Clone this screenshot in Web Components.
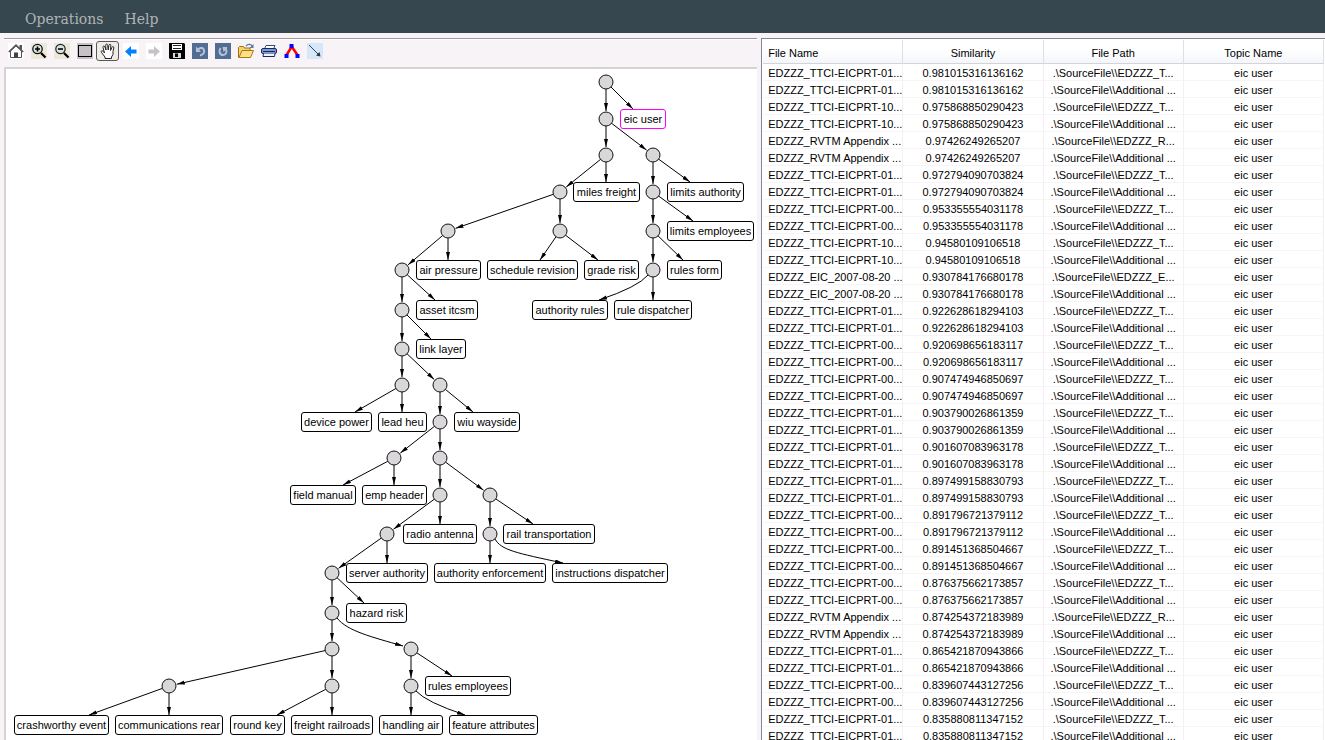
<!DOCTYPE html>
<html lang="en">
<head>
<meta charset="utf-8">
<title>Topic Browser</title>
<style>
  html, body { margin: 0; height: 100%; }
  body { background: #f7f3f7; overflow: hidden; font-family: "Liberation Sans", Arial, sans-serif; font-size: 11px; color: #000; }
</style>
</head>
<body>
<topic-app></topic-app>

<script>
const define = (name, html, setup) => {
  const template = document.createElement('template');
  template.innerHTML = html;
  customElements.define(name, class extends HTMLElement {
    connectedCallback() {
      if (this.shadowRoot) return;
      this.attachShadow({ mode: 'open' }).append(template.content.cloneNode(true));
      if (setup) setup(this, this.shadowRoot);
    }
  });
};

/* ---------- Menu ---------- */
define('menu-item', `
<style>
  :host { display: block; }
  button { border: 0; padding: 0; background: none; color: #b0b4b6; font: 14px/20px "DejaVu Serif", serif; }
</style>
<button type="button"><slot></slot></button>`);

define('menu-bar', `
<style>
  :host { display: block; background: #37474f; }
  nav { display: flex; align-items: center; gap: 21px; height: 33px; padding: 4px 25px 0; box-sizing: border-box; }
</style>
<nav><slot></slot></nav>`);

/* ---------- Toolbar ---------- */
const ICONS = {
  home: `<rect width="16" height="16" fill="#fff"/><path d="M11.500 2H14v5l-2.500-2z" fill="#555"/><path d="M2.500 8v6.500h11V8L8 3z" fill="#fdfdfd" stroke="#555"/><path d="M.8 9 8 2l7.200 7" fill="none" stroke="#555" stroke-width="1.600"/><path d="M6 9.500h4V15H6z" fill="#444"/>`,
  zoomin: `<rect width="16" height="16" fill="#ece9d8"/><circle cx="6.500" cy="6" r="4.700" fill="#d8e4e0" stroke="#111" stroke-width="1.300"/><path d="M4 6h5M6.500 3.500v5" stroke="#000" stroke-width="1.600"/><path d="M10 10l4.500 4.500" stroke="#000" stroke-width="2.300"/>`,
  zoomout: `<rect width="16" height="16" fill="#ece9d8"/><circle cx="6.500" cy="6" r="4.700" fill="#d8e4e0" stroke="#222" stroke-width="1.200"/><path d="M4 6h5" stroke="#000" stroke-width="1.600"/><path d="M10 10l4.500 4.500" stroke="#000" stroke-width="2.300"/>`,
  select: `<rect width="16" height="16" fill="#c6c3c6"/><rect x="1.500" y="2.500" width="13" height="11" fill="#c6c3c6" stroke="#000"/>`,
  pan: `<path d="M5 15.500V14L1.500 9.500c-1-1.500.5-2.300 1.500-1.300L4.500 10 3 4.500c-.4-1.600 1.400-2 1.900-.5L6 7 5.700 2.300c0-1.600 1.800-1.600 2 0L8.200 7l.7-4.700c.3-1.500 2-1.300 1.900.2L10.500 7.500l1.500-3.200c.6-1.400 2.200-.8 1.800.6L13 8.500v3L11.500 14v1.500z" fill="#fff" stroke="#222" stroke-width="1"/>`,
  back: `<rect width="16" height="16" fill="#fff"/><path d="M2 8.500 8 3v3.500h5.500v4H8V14z" fill="#0082ff"/>`,
  forward: `<rect width="16" height="16" fill="#fff"/><path d="M14 8.500 8 3v3.500H2.500v4H8V14z" fill="#c6c3c6"/>`,
  save: `<path d="M0 0h15l1 1v15H1l-1-1z" fill="#000"/><path d="M3 1h10v6H3z" fill="#fff"/><path d="M4 2.500h8M4 5.500h8" stroke="#222"/><path d="M4 10h8v5H4z" fill="#d8d8d8"/><path d="M6 10.500h3v3.500H6z" fill="#000"/>`,
  undo: `<rect width="16" height="16" fill="#526d94"/><path d="M8 12.500c4-1 5-4 3.500-6.500C10 4 7 5 5.500 7.500" fill="none" stroke="#b5c3d6" stroke-width="2"/><path d="M4 3.500v5.500h5z" fill="#b5c3d6"/>`,
  redo: `<rect width="16" height="16" fill="#526d94"/><path d="M5.500 5C3.500 8 4.500 12 8 12c3 0 4.500-3 2.800-6" fill="none" stroke="#b5c3d6" stroke-width="2"/><path d="M7.500 4H12v1.500L8.500 9z" fill="#b5c3d6"/>`,
  open: `<path d="M.5 14.500v-10l1-1h4l1 1.500H12V8" fill="#f7d36b" stroke="#9c7110"/><path d="M1 14.500 4 7.500h11.500l-3 7z" fill="#ffe08a" stroke="#a8780f"/><path d="M8 3c2-2.500 5-2 6 0" fill="none" stroke="#5579a8" stroke-width="1.300"/><path d="M15.500 1v4h-4z" fill="#5579a8"/>`,
  print: `<path d="M3.500 6 5 2.500h9L12.500 6z" fill="#fff" stroke="#334a86"/><rect x=".5" y="5.500" width="15" height="5" rx="1.500" fill="#7b9bd6" stroke="#17275f"/><path d="M2 8.500h12" stroke="#17275f"/><path d="M2.500 10.500 2 13.500h11.500l.5-3" fill="#eef3ff" stroke="#17275f"/>`,
  layout: `<path d="M7.500 4 2.500 12M8 4l5.500 8" stroke="#f00" stroke-width="2.500"/><path d="M5.500 1h4v4h-4zM.5 11h4v4h-4zM11.500 11h4v4h-4z" fill="#0008f7"/>`,
  edge: `<rect width="16" height="16" fill="#d6e7f7"/><path d="M2 2l10 10" stroke="#33475c" stroke-width="1"/><path d="M13.500 13.500 12.500 9 9 12.500z" fill="#26384c"/>`
};

define('tool-button', `
<style>
  :host { display: block; width: 23px; }
  button { display: flex; align-items: center; justify-content: center; width: 23px; height: 20px; box-sizing: border-box; padding: 0; border: 1px solid transparent; border-radius: 3px; background: none; }
  :host([pressed]) button { border-color: #5a595a; background: #efebe7; }
  svg { display: block; width: 16px; height: 16px; flex: none; }
</style>
<button type="button"><svg viewBox="0 0 16 16" aria-hidden="true"></svg></button>`, (host, root) => {
  root.querySelector('svg').innerHTML = ICONS[host.getAttribute('icon')];
  const button = root.querySelector('button');
  button.setAttribute('aria-label', host.getAttribute('label'));
  if (host.hasAttribute('pressed')) button.setAttribute('aria-pressed', 'true');
});

define('tool-bar', `
<style>
  :host { display: flex; align-items: center; height: 29px; box-sizing: border-box; border-top: 1px solid #9c9a9c; box-shadow: inset 0 1px #fff; padding-bottom: 4px; }
</style>
<slot></slot>`);

/* ---------- Topic tree ---------- */
const NODES = {
  a: [600, 13], b: [600, 50], c: [600, 86], d: [554, 123], e: [647, 86], f: [647, 123], g: [647, 162], h: [647, 201],
  i: [554, 162], j: [442, 162], k: [396, 201], l: [396, 241], m: [396, 280], n: [396, 316], o: [434, 316], p: [434, 353],
  q: [388, 389], r: [434, 389], s: [434, 426], t: [484, 426], u: [484, 465], v: [381, 465], w: [326, 504], x: [326, 544],
  y: [326, 580], z: [405, 580], aa: [405, 617], ab: [326, 617], ac: [163, 617]
};
const LINKS = ['ab', 'bc', 'be', 'cd', 'ef', 'fg', 'gh', 'di', 'dj', 'jk', 'kl', 'lm', 'mn', 'mo', 'op', 'pq', 'pr', 'rs', 'rt', 'tu', 'sv', 'vw', 'wx', 'xy']
  .map(pair => [...pair]).concat([['y', 'ab'], ['y', 'ac'], ['z', 'aa']]);
/* parent, text, left, middle, width, x of the arrow tip, optional curve */
const TOPICS = [
  ['a', 'eic user', 614, 50, 46, 627],
  ['c', 'miles freight', 567, 123, 67, 600],
  ['e', 'limits authority', 661, 123, 77, 684],
  ['f', 'limits employees', 661, 162, 87, 687],
  ['j', 'air pressure', 410, 201, 65, 442],
  ['i', 'schedule revision', 481, 201, 91, 534],
  ['i', 'grade risk', 578, 201, 55, 592],
  ['g', 'rules form', 661, 201, 55, 677],
  ['h', 'authority rules', 526, 241, 76, 593, 'Q632 218 593 231'],
  ['h', 'rule dispatcher', 608, 241, 78, 647],
  ['k', 'asset itcsm', 410, 241, 62, 429],
  ['l', 'link layer', 410, 280, 50, 425],
  ['n', 'device power', 295, 353, 71, 349],
  ['n', 'lead heu', 372, 353, 49, 396],
  ['o', 'wiu wayside', 448, 353, 66, 467],
  ['q', 'field manual', 284, 426, 66, 337],
  ['q', 'emp header', 356, 426, 65, 388],
  ['s', 'radio antenna', 397, 465, 74, 434],
  ['t', 'rail transportation', 497, 465, 92, 527],
  ['v', 'server authority', 340, 504, 82, 381],
  ['u', 'authority enforcement', 428, 504, 112, 484],
  ['u', 'instructions dispatcher', 546, 504, 116, 557, 'C495 481 510 484 557 494'],
  ['w', 'hazard risk', 340, 544, 61, 358],
  ['z', 'rules employees', 419, 617, 86, 446],
  ['ac', 'crashworthy event', 8, 656, 95, 83],
  ['ac', 'communications rear', 109, 656, 108, 163],
  ['ab', 'round key', 224, 656, 55, 271],
  ['ab', 'freight railroads', 285, 656, 82, 326],
  ['aa', 'handling air', 373, 656, 64, 405],
  ['aa', 'feature attributes', 443, 656, 89, 459, 'Q420 633 459 646']
];

define('topic-label', `
<style>
  :host { position: absolute; box-sizing: border-box; height: 20px; border: 1px solid #000; border-radius: 3px; background: #fff; font-size: 11px; line-height: 18px; text-align: center; white-space: nowrap; }
  :host([selected]) { border-color: #f0f; }
</style>
<slot></slot>`);

define('topic-tree', `
<style>
  :host { display: block; position: relative; overflow: hidden; background: #fff; border: solid #d6d3d6; border-width: 2px 0 0 2px; }
  svg { position: absolute; inset: 0; width: 100%; height: 100%; }
  .edge { fill: none; stroke: #000; marker-end: url(#tip); }
  circle { fill: #d9d7d9; stroke: #111; }
</style>
<svg aria-hidden="true">
  <defs><marker id="tip" markerWidth="9" markerHeight="5" refX="8" refY="2" orient="auto" markerUnits="userSpaceOnUse"><path d="M0 0 8 2 0 4z"/></marker></defs>
</svg>`, (host, root) => {
  const RADIUS = 7;
  const rim = ([x, y], [tx, ty], gap) => {
    const d = Math.hypot(tx - x, ty - y);
    return [x + (tx - x) * gap / d, y + (ty - y) * gap / d];
  };
  let art = '';
  for (const [from, to] of LINKS) {
    const a = NODES[from], b = NODES[to];
    art += `<path class="edge" d="M${rim(a, b, RADIUS)}L${rim(b, a, RADIUS + 1)}"/>`;
  }
  art += '<path class="edge" d="M331 549C341 562 366 568 397 577"/>';
  for (const [parent, , , middle, , tip, curve] of TOPICS) {
    const a = NODES[parent], end = [tip, middle - 10];
    const start = curve ? [a[0] + (tip < a[0] ? -5 : 5), a[1] + 5] : rim(a, end, RADIUS);
    art += `<path class="edge" d="M${start}${curve || 'L' + end}"/>`;
  }
  for (const [x, y] of Object.values(NODES)) art += `<circle cx="${x}" cy="${y}" r="${RADIUS}"/>`;
  root.querySelector('svg').insertAdjacentHTML('beforeend', art);
  for (const [, text, left, middle, width] of TOPICS) {
    const label = document.createElement('topic-label');
    label.textContent = text;
    label.style.cssText = `left:${left}px;top:${middle - 10}px;width:${width}px`;
    if (text === 'eic user') label.setAttribute('selected', '');
    root.append(label);
  }
});

/* ---------- Result table ---------- */
const RESULTS = [
  ['TTCI-EICPRT-01', '0.981015316136162'], ['TTCI-EICPRT-10', '0.975868850290423'], ['RVTM Appendix ', '0.97426249265207'],
  ['TTCI-EICPRT-01', '0.972794090703824'], ['TTCI-EICPRT-00', '0.953355554031178'], ['TTCI-EICPRT-10', '0.94580109106518'],
  ['EIC_2007-08-20 ', '0.930784176680178'], ['TTCI-EICPRT-01', '0.922628618294103'], ['TTCI-EICPRT-00', '0.920698656183117'],
  ['TTCI-EICPRT-00', '0.907474946850697'], ['TTCI-EICPRT-01', '0.903790026861359'], ['TTCI-EICPRT-01', '0.901607083963178'],
  ['TTCI-EICPRT-01', '0.897499158830793'], ['TTCI-EICPRT-00', '0.891796721379112'], ['TTCI-EICPRT-00', '0.891451368504667'],
  ['TTCI-EICPRT-00', '0.876375662173857'], ['RVTM Appendix ', '0.874254372183989'], ['TTCI-EICPRT-01', '0.865421870943866'],
  ['TTCI-EICPRT-00', '0.839607443127256'], ['TTCI-EICPRT-01', '0.835880811347152']
];

define('result-table', `
<style>
  :host { display: block; overflow: hidden; background: #fff; border: solid #848694; border-width: 1px 0 0 1px; padding: 1px 1px 0; }
  table { width: 100%; table-layout: fixed; border-collapse: separate; border-spacing: 0; font-size: 11px; line-height: 14px; }
  th, td { box-sizing: border-box; padding: 2px 0 0; white-space: nowrap; font-weight: normal; text-align: center; }
  th { height: 24px; border-bottom: 1px solid #d6d3d6; border-right: 1px solid #dedfe7; background: linear-gradient(#fff 40%, #f3f6fb); }
  td { height: 17px; border-bottom: 1px solid #f7f3f7; border-right: 1px solid #f3eff3; }
  th:first-child, td:first-child { text-align: left; padding-left: 5px; }
</style>
<table>
  <thead><tr><th scope="col">File Name</th><th scope="col">Similarity</th><th scope="col">File Path</th><th scope="col">Topic Name</th></tr></thead>
  <tbody></tbody>
</table>`, (host, root) => {
  root.querySelector('tbody').innerHTML = RESULTS.flatMap(([file, score]) =>
    ['EDZZZ_' + file[0], 'Additional '].map(path =>
      `<tr><td>EDZZZ_${file}...</td><td>${score}</td><td>.\\SourceFile\\\\${path}...</td><td>eic user</td></tr>`)).join('');
});

/* ---------- Shell ---------- */
define('topic-app', `
<style>
  :host { display: flex; flex-direction: column; height: 100vh; }
  main { flex: 1; min-height: 0; display: grid; grid-template: minmax(0, 1fr) / 27fr 20fr; padding-top: 5px; }
  section { display: flex; flex-direction: column; min-width: 0; padding: 0 4px; }
  topic-tree { flex: 1; min-height: 0; }
</style>
<menu-bar><menu-item>Operations</menu-item><menu-item>Help</menu-item></menu-bar>
<main>
  <section>
    <tool-bar>
      <tool-button icon="home" label="Home"></tool-button>
      <tool-button icon="zoomin" label="Zoom in"></tool-button>
      <tool-button icon="zoomout" label="Zoom out"></tool-button>
      <tool-button icon="select" label="Select"></tool-button>
      <tool-button icon="pan" label="Pan" pressed></tool-button>
      <tool-button icon="back" label="Back"></tool-button>
      <tool-button icon="forward" label="Forward"></tool-button>
      <tool-button icon="save" label="Save"></tool-button>
      <tool-button icon="undo" label="Undo"></tool-button>
      <tool-button icon="redo" label="Redo"></tool-button>
      <tool-button icon="open" label="Open"></tool-button>
      <tool-button icon="print" label="Print"></tool-button>
      <tool-button icon="layout" label="Layout"></tool-button>
      <tool-button icon="edge" label="Edge"></tool-button>
    </tool-bar>
    <topic-tree></topic-tree>
  </section>
  <result-table></result-table>
</main>`);
</script>
</body>
</html>
